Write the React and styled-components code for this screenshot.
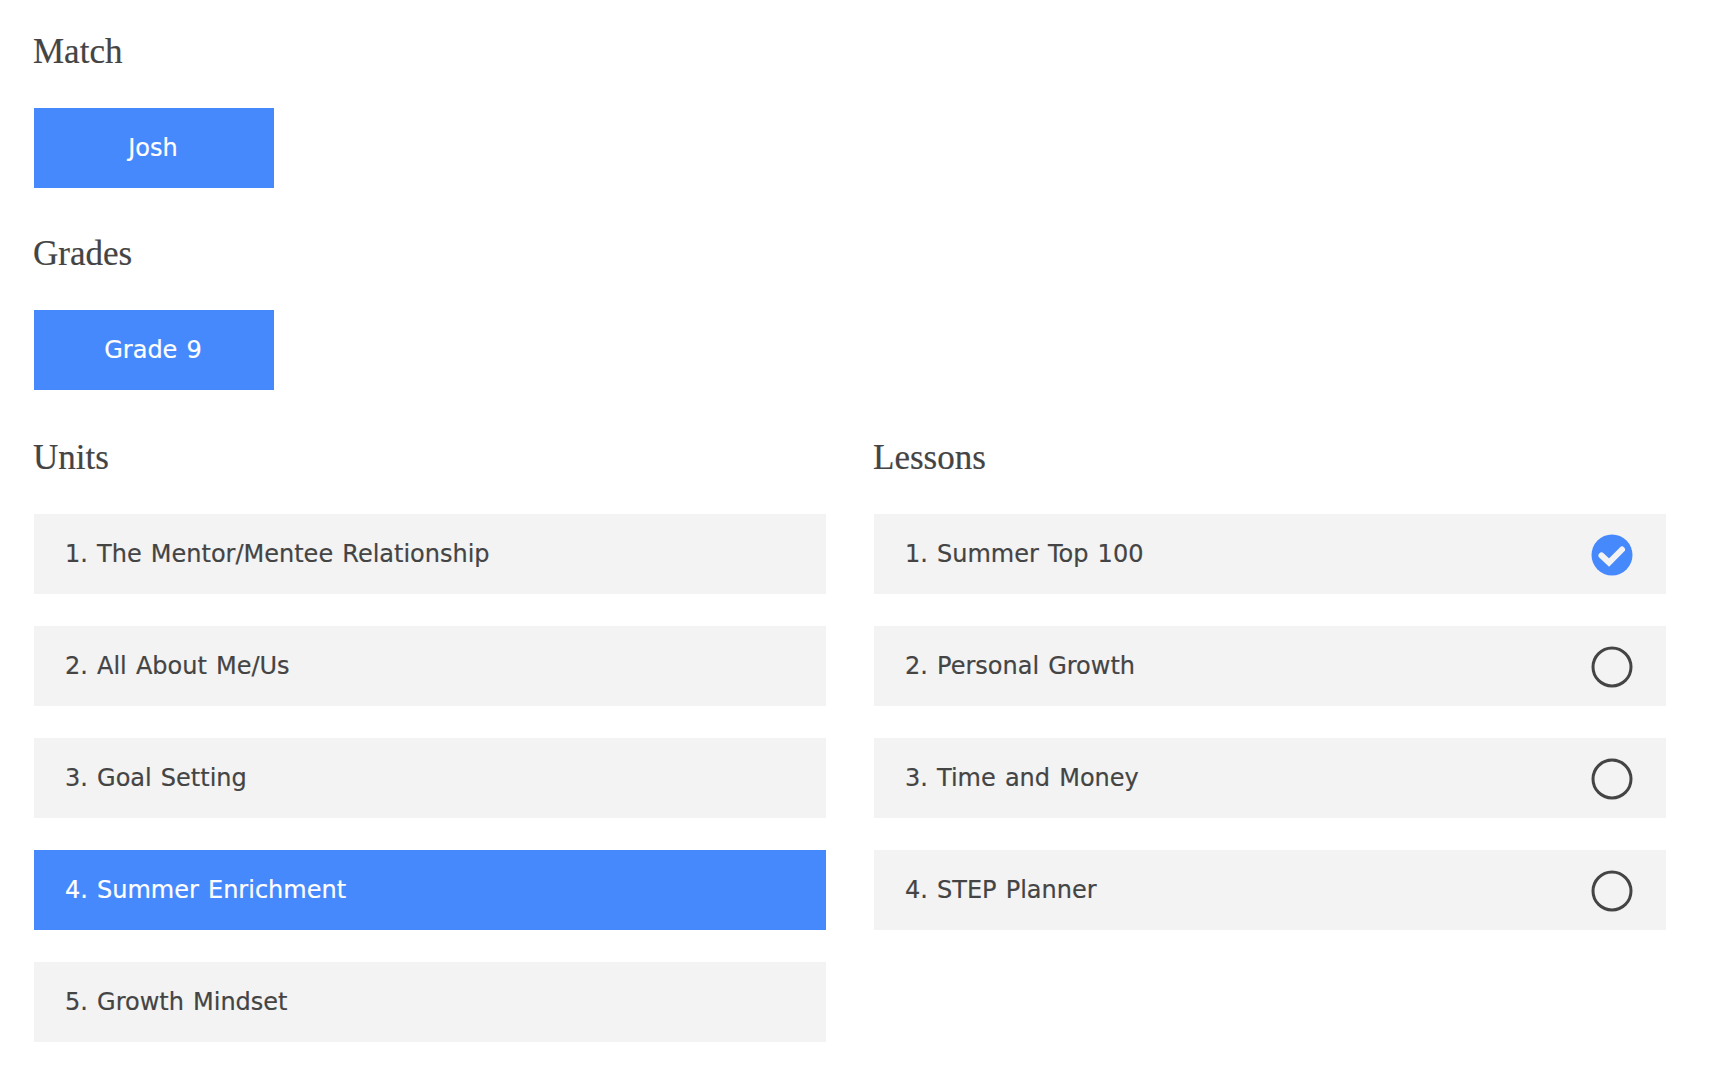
import React from "react";
import styled, {createGlobalStyle} from "styled-components";

const GlobalStyle = createGlobalStyle`
  html, body {
    margin: 0;
    padding: 0;
    background: #fff;
  }
`;

const Page = styled.div`
  box-sizing: border-box;
  width: 1710px;
  height: 1076px;
  padding: 31px 44px 0 34px;
  color: #444;
  font-family: "DejaVu Sans", Verdana, sans-serif;
  -webkit-text-stroke: 0.2px;
  overflow: hidden;
`;

const Heading = styled.h2`
  margin: 0 0 35px -1px;
  height: 42px;
  line-height: 42px;
  font-family: "Liberation Serif", Georgia, serif;
  font-size: 35px;
  font-weight: 400;
  color: #444;
`;

const Section = styled.section`
  margin-bottom: 45px;
`;

const Chip = styled.button`
  display: block;
  width: 240px;
  height: 80px;
  padding: 0 2px 0 0;
  border: 0;
  background: #4689fd;
  color: #fff;
  font-family: inherit;
  font-size: 24px;
  word-spacing: 1.5px;
  text-align: center;
`;

const Columns = styled.div`
  display: grid;
  grid-template-columns: 792px 792px;
  column-gap: 48px;
  margin-top: 47px;
`;

const List = styled.ol`
  display: flex;
  flex-direction: column;
  gap: 32px;
  margin: 0;
  padding: 0;
  list-style: none;
`;

const Row = styled.li`
  display: flex;
  align-items: center;
  justify-content: space-between;
  box-sizing: border-box;
  height: 80px;
  padding: 0 33px 0 31px;
  background: ${(p) => (p.$active ? "#4689fd" : "#f3f3f3")};
  color: ${(p) => (p.$active ? "#fff" : "#444")};
  font-size: 24px;
  word-spacing: 1.5px;
`;

const IconSvg = styled.svg`
  margin-top: 2px;
`;

const StatusIcon = ({done}) => (
  <IconSvg width="42" height="42" viewBox="0 0 42 42" aria-hidden="true">
    {done ? (
      <>
        <circle cx="21" cy="21" r="20.5" fill="#4689fd" />
        <path
          d="M10.5 21.5 18 28.5 31 15.5"
          fill="none"
          stroke="#f3f3f3"
          strokeWidth="6"
          strokeLinecap="round"
          strokeLinejoin="miter"
        />
      </>
    ) : (
      <circle cx="21" cy="21" r="19" fill="none" stroke="#444" strokeWidth="3" />
    )}
  </IconSvg>
);

const units = [
  "1. The Mentor/Mentee Relationship",
  "2. All About Me/Us",
  "3. Goal Setting",
  "4. Summer Enrichment",
  "5. Growth Mindset",
];

const lessons = [
  "1. Summer Top 100",
  "2. Personal Growth",
  "3. Time and Money",
  "4. STEP Planner",
];

export default function App() {
  return (
    <Page>
      <GlobalStyle />
      <Section>
        <Heading>Match</Heading>
        <Chip>Josh</Chip>
      </Section>
      <Section>
        <Heading>Grades</Heading>
        <Chip>Grade 9</Chip>
      </Section>
      <Columns>
        <div>
          <Heading>Units</Heading>
          <List>
            {units.map((unit, i) => (
              <Row key={unit} $active={i === 3}>
                <span>{unit}</span>
              </Row>
            ))}
          </List>
        </div>
        <div>
          <Heading>Lessons</Heading>
          <List>
            {lessons.map((lesson, i) => (
              <Row key={lesson}>
                <span>{lesson}</span>
                <StatusIcon done={i === 0} />
              </Row>
            ))}
          </List>
        </div>
      </Columns>
    </Page>
  );
}
